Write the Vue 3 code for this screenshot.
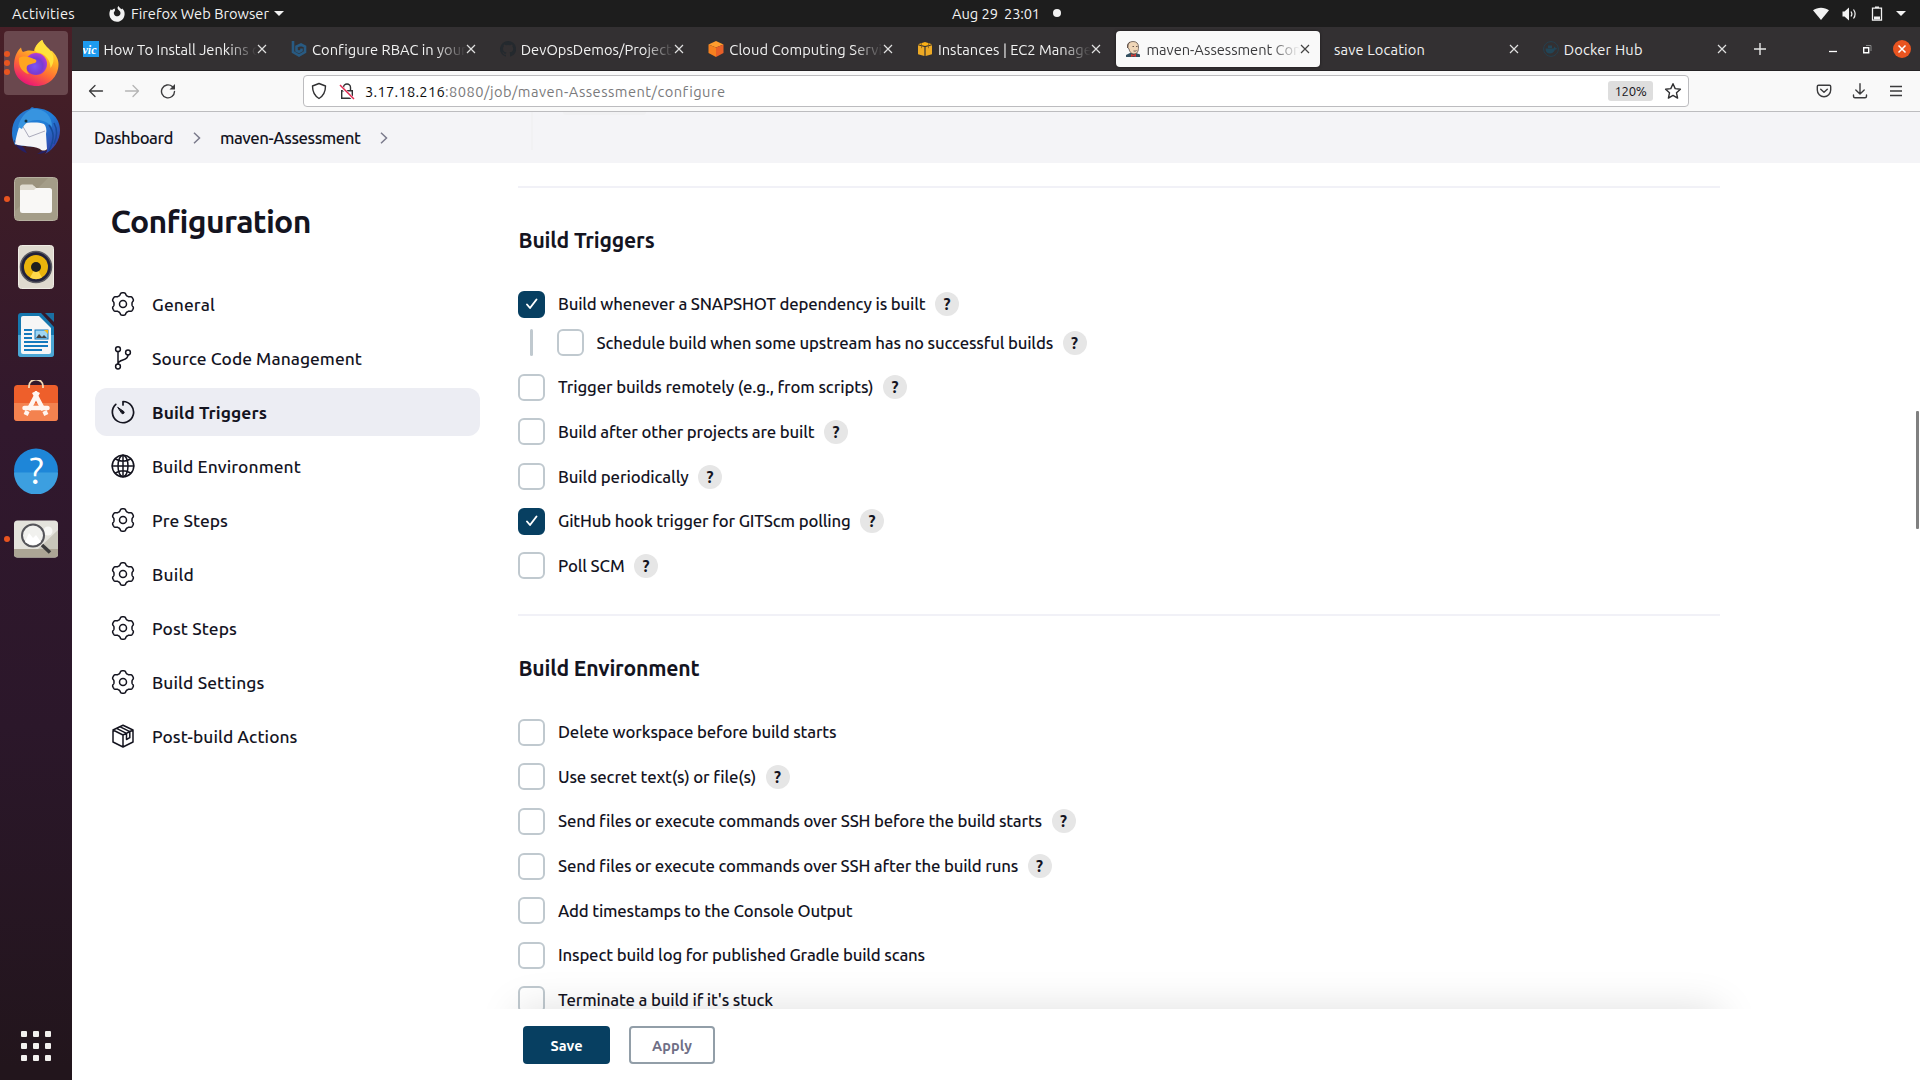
<script setup>
// Spreads the letters of a label so that it takes up the given width in px.
const vFit = {
  mounted(el, { value }) {
    if (!value) return
    const natural = el.getBoundingClientRect().width
    const count = el.textContent.length
    el.style.letterSpacing = ((value - natural) / count).toFixed(3) + 'px'
  }
}

const tabs = [
  { icon: 'vic', title: 'How To Install Jenkins o' },
  { icon: 'bit', title: 'Configure RBAC in your', w: 154 },
  { icon: 'github', title: 'DevOpsDemos/Project-', w: 155 },
  { icon: 'aws', title: 'Cloud Computing Servi', w: 153 },
  { icon: 'ec2', title: 'Instances | EC2 Manage', w: 154 },
  { icon: 'jenkins', title: 'maven-Assessment Con', w: 155, active: true },
  { icon: '', title: 'save Location', w: 91 },
  { icon: 'docker', title: 'Docker Hub', w: 79 }
]

const menu = [
  { icon: 'gear', label: 'General', w: 63 },
  { icon: 'branch', label: 'Source Code Management', w: 210 },
  { icon: 'timer', label: 'Build Triggers', w: 115, active: true },
  { icon: 'globe', label: 'Build Environment', w: 149 },
  { icon: 'gear', label: 'Pre Steps', w: 76 },
  { icon: 'gear', label: 'Build', w: 42 },
  { icon: 'gear', label: 'Post Steps', w: 85 },
  { icon: 'gear', label: 'Build Settings', w: 112.5 },
  { icon: 'box', label: 'Post-build Actions', w: 145.5 }
]

const triggers = [
  { label: 'Build whenever a SNAPSHOT dependency is built', w: 367.5, checked: true, help: true },
  { label: 'Schedule build when some upstream has no successful builds', w: 456.5, help: true, nested: true },
  { label: 'Trigger builds remotely (e.g., from scripts)', w: 315.5, help: true },
  { label: 'Build after other projects are built', w: 256.5, help: true },
  { label: 'Build periodically', w: 130.5, help: true },
  { label: 'GitHub hook trigger for GITScm polling', w: 292.5, checked: true, help: true },
  { label: 'Poll SCM', w: 66.5, help: true }
]

const environment = [
  { label: 'Delete workspace before build starts', w: 278.5 },
  { label: 'Use secret text(s) or file(s)', w: 197.5, help: true },
  { label: 'Send files or execute commands over SSH before the build starts', w: 483.5, help: true },
  { label: 'Send files or execute commands over SSH after the build runs', w: 459.5, help: true },
  { label: 'Add timestamps to the Console Output', w: 294.5 },
  { label: 'Inspect build log for published Gradle build scans', w: 367 },
  { label: "Terminate a build if it's stuck", w: 215 }
]

const sections = [
  { title: 'Build Triggers', w: 136, rows: triggers },
  { title: 'Build Environment', w: 181, rows: environment }
]

// Outline of the six-lobed cog, traced in polar coordinates around (12, 12).
const gearPath = (() => {
  const pts = []
  for (let i = 0; i < 144; i++) {
    const a = (i / 144) * Math.PI * 2
    const wave = Math.tanh(2 * Math.cos(6 * (a - Math.PI / 2)) + 0.2)
    const r = 10.1 + 1.15 * wave
    pts.push((12 + r * Math.cos(a)).toFixed(2) + ' ' + (12 + r * Math.sin(a)).toFixed(2))
  }
  return 'M' + pts.join('L') + 'Z'
})()
</script>

<template>
  <div class="desktop">
    <header class="topbar">
      <span v-fit="63" class="activities">Activities</span>
      <svg class="ff-mono" width="16" height="16" viewBox="0 0 16 16">
        <path fill="#f2f2f2" d="M1.8 3.2 3 4.2C4 3 5 2.6 6.2 2.7 5.8 3.5 5.7 4.2 6 5 5 5.4 4.6 6.6 5 8c.6 2 2.8 2.8 4.6 2 1.7-.8 2.3-2.6 1.6-4.2C10.700 4.500 9 4 8.600 2.400 8.400 1.400 9 .6 9.600 0c.5 1.600 1.800 2.200 2.800 3.200l.8-.7C15 4 15.800 6 15.600 8.400 15.200 12.700 12 15.700 8 15.700S.7 12.700.4 8.500C.3 6.500.7 4.800 1.800 3.200z" />
      </svg>
      <span v-fit="138" class="app-name">Firefox Web Browser</span>
      <i class="caret"></i>
      <div class="clock">
        <span v-fit="46">Aug 29</span><span v-fit="36" class="time">23:01</span><i class="notice"></i>
      </div>
      <div class="tray">
        <svg width="16" height="14" viewBox="0 0 16 14"><path fill="#f2f2f2" d="M0 3.200C4.500-.2 11.500-.2 16 3.200L8 13z" /></svg>
        <svg width="16" height="14" viewBox="0 0 16 14">
          <path fill="#f2f2f2" d="M.5 4.500h2L7 .5v13L2.500 9.500h-2z" />
          <path fill="none" stroke="#f2f2f2" stroke-width="1.200" d="M9 4.500q1.800 2.500 0 5M11.500 2.500q3.200 4.500 0 9" />
        </svg>
        <svg width="12" height="16" viewBox="0 0 12 16">
          <path fill="none" stroke="#f2f2f2" stroke-width="1.300" d="M1.500 2.200h9v12h-9z" /><path fill="#f2f2f2" d="M4 .5h4v1.500H4zM3 10.500h6v3H3z" />
        </svg>
        <i class="caret"></i>
      </div>
    </header>

    <div class="body">
      <nav class="dock">
        <div class="launcher running focused">
          <i class="pips"><b></b><b></b><b></b></i>
          <svg width="48" height="48" viewBox="0 0 48 48">
            <defs>
              <linearGradient id="fx" x1=".8" y1="0" x2=".3" y2="1"><stop offset="0" stop-color="#fff04a" /><stop offset=".35" stop-color="#ffb224" /><stop offset=".65" stop-color="#ff6a35" /><stop offset="1" stop-color="#e8107a" /></linearGradient>
              <radialGradient id="fg" cx=".45" cy=".6" r=".6"><stop offset="0" stop-color="#7a55f5" /><stop offset=".6" stop-color="#7a3bd0" /><stop offset="1" stop-color="#b53bd6" /></radialGradient>
            </defs>
            <path fill="url(#fx)" d="M2 27C2 20 4 13 9 8.500c.5 2.500 1 3.500 2 4.500 3-1.500 7-2 11-1 .5-4 4-8.500 8-11 1 4 3.500 6 5.500 8.500 1-.3 2 1 2.500 2l2 .5C44 16 46.500 20 46.500 25 46.500 38 36.500 47 24.500 47S2 38.500 2 27z" />
            <circle cx="24" cy="25" r="11" fill="url(#fg)" />
            <path fill="#ffa51f" d="M7 19c5-3 10-1 15 1 3 .5 3 3 1 4-3 1-6 1-8 3-1 3 0 6 2 8-6-1-11-7-10-16z" />
            <path fill="#ffe23d" d="M23 12c0-5 4-9 7.500-11 1 5 7 8 10 14 2 5 1 10-2 14 0-8-5-13-10-15-2 0-4-1-5.500-2z" />
          </svg>
        </div>
        <div class="launcher">
          <svg width="48" height="48" viewBox="0 0 48 48">
            <defs><linearGradient id="tb" x1="0" y1="0" x2="1" y2="1"><stop offset="0" stop-color="#2a72c8" /><stop offset=".5" stop-color="#1f7fd8" /><stop offset="1" stop-color="#3a2f9a" /></linearGradient></defs>
            <path fill="url(#tb)" d="M0 26C0 12 8 5 18 2c1-2 3-2 4-1C37 1 48 10 48 23c0 11-6 19-15 24 2-2 2-4 2-6L3 38C1 34 0 30 0 26z" />
            <path fill="#252064" d="M2 33c2 7 6 11 13 13l-3-5zM30 44l-5 3c4 0 8-1 10-3z" />
            <path fill="#f5f5f7" d="M3 37C4 30 6 22 9 15c7 2 15-1 23 2 2 2 3 6 2 10l1 15c-2 2-5 2-7 0-8-4-18-2-25-5z" />
            <path fill="none" stroke="#aab" stroke-width="1" d="m10 18 7 12 16-6" />
            <path fill="#3794e0" d="M6 20C8 11 14 4 20 2c12-1 20 6 20 18-6-7-15-9-24-5-3 2-5 4-6 7z" />
            <circle cx="14" cy="14" r="1.500" fill="#134" />
            <path fill="none" stroke="#174a99" stroke-width="1.500" d="M37 18c5 7 6 13 0 26M42 16c4 7 3 14 0 21" />
          </svg>
        </div>
        <div class="launcher running">
          <i class="pips"><b></b></i>
          <svg width="46" height="46" viewBox="0 0 46 46">
            <rect x="1.500" y="1.500" width="43" height="43" rx="4" fill="#9b937e" stroke="#b7b1a1" />
            <path fill="#a8a18d" d="M35 2h8q1.500 0 1.500 1.500V44H2V35z" opacity=".7" />
            <path fill="#dfdbd0" d="M7 15v-4q0-2.500 2.500-2.500h10L23 12v4z" />
            <rect x="7" y="12" width="32" height="25" rx="2.500" fill="#f9f8f6" /><path fill="#dfdbd0" d="M7 14V10h14l2 2-2 2z" />
          </svg>
        </div>
        <div class="launcher">
          <svg width="46" height="46" viewBox="0 0 46 46">
            <rect x="5.500" y="1.500" width="35" height="43" rx="3" fill="#dfdacf" stroke="#efece5" />
            <circle cx="23" cy="23" r="15.500" fill="#22223a" stroke="#5b5b62" stroke-width="1.500" />
            <circle cx="23" cy="23" r="12" fill="#eab40c" /><path fill="#ffd84a" d="m23 23-6 10.500a12 12 0 0 0 12 0z" />
            <circle cx="23" cy="23" r="5" fill="#1e1e1e" />
          </svg>
        </div>
        <div class="launcher">
          <svg width="46" height="46" viewBox="0 0 46 46">
            <path fill="#1577ae" d="M8 1h20l13 14v27q0 3-3 3H8q-3 0-3-3V4q0-3 3-3z" />
            <path fill="#4ba6d4" d="M5 23h36v19q0 3-3 3H8q-3 0-3-3z" />
            <path fill="#1a6fa3" d="M32 1h9v9z" />
            <path fill="#f6f6f6" d="M10 4h16l12 12v24q0 2-2 2H10q-2 0-2-2V6q0-2 2-2z" />
            <path stroke="#1379bd" stroke-width="2" d="M11 18h8M11 22h8M11 26h8M11 30h24M11 34h24M11 38h18" />
            <rect x="22" y="18" width="13" height="9" fill="#9fd5f2" stroke="#1379bd" /><path fill="#444" d="m23 26 3-4 3 3 2-2 3 3z" /><path fill="#f3b81c" d="M31 18h4v4z" />
          </svg>
        </div>
        <div class="launcher">
          <svg width="46" height="46" viewBox="0 0 46 46">
            <rect x="1" y="5" width="44" height="36" rx="3.500" fill="#ee5f2b" /><path fill="#f4824f" d="M1 23h44v14.500q0 3.500-3.500 3.500h-37Q1 41 1 37.500z" />
            <path fill="none" stroke="#f3d9b4" stroke-width="1.800" d="M16 8V6a7 6.500 0 0 1 14 0v2" />
            <g fill="none" stroke="#fff6f0" stroke-linecap="round"><path stroke-width="4.500" d="M11.500 28h23" /><path stroke-width="4.500" stroke-linecap="butt" d="m25 12-9.500 18M21 12l9.500 18" /><path stroke-width="4.500" stroke-linecap="butt" d="m14.500 31-1.800 4M31.500 31l1.800 4" /></g>
          </svg>
        </div>
        <div class="launcher">
          <svg width="46" height="46" viewBox="0 0 46 46">
            <circle cx="23" cy="22.500" r="22" fill="#1e86d8" /><path fill="#3c9fe0" d="M1 24.500h44a22 22 0 0 1-44 0z" />
            <text x="23.500" y="36" text-anchor="middle" class="help-glyph">?</text>
          </svg>
        </div>
        <div class="launcher running">
          <i class="pips"><b></b></i>
          <svg width="46" height="46" viewBox="0 0 46 46">
            <rect x="1" y="4.500" width="44" height="37" rx="3.500" fill="#e4e3dc" /><path fill="#c9c7bb" d="M45 14v19H25z" /><path fill="#aca595" d="M1 33h44v5q0 3.500-3.500 3.500h-37Q1 41.500 1 38z" />
            <circle cx="35" cy="15" r="4.500" fill="#f8f8f5" />
            <circle cx="20" cy="19.500" r="11" fill="#f1f1ee" stroke="#55555a" stroke-width="2" />
            <path fill="#fff" d="m12 26 4-9 4 5 3-3 5 7q-8 6-16 0z" />
            <path stroke="#3a3a3a" stroke-width="3.500" d="m29 29 8 7.500" />
          </svg>
        </div>
        <div class="show-apps"><i v-for="n in 9" :key="n"></i></div>
      </nav>

      <main class="browser">
        <div class="tabstrip">
          <div v-for="t in tabs" :key="t.title" class="slot">
            <div class="tab" :class="{ active: t.active }">
              <svg v-if="t.icon" class="favicon" width="16" height="16" viewBox="0 0 16 16">
                <template v-if="t.icon === 'vic'"><rect width="16" height="16" fill="#1d9bf0" /><text x="-.5" y="13" class="vic">vic</text></template>
                <path v-else-if="t.icon === 'bit'" fill="none" stroke="#285a82" stroke-width="2.600" d="M2 0v11l6 3.500 6-3.500V5.500l-4-2-4.500 2v4.200L8 11l2.500-1.400V7.500" />
                <path v-else-if="t.icon === 'github'" fill="#24292e" d="M8 0a8 8 0 0 0-2.500 15.600c.4.1.5-.2.5-.4v-1.500c-2 .4-2.700-.9-2.900-1.500-.1-.3-.6-1.100-1-1.300 1-.2 1.400.7 1.700 1.100.6 1.100 1.700.8 2.200.6.1-.5.300-.9.600-1.100C4.700 11.300 3 10.600 3 7.600c0-.9.300-1.600.8-2.100-.1-.2-.4-1 .1-2.100 0 0 .7-.2 2.200.8a7.600 7.600 0 0 1 4 0c1.500-1 2.200-.8 2.200-.8.4 1.100.2 1.900.1 2.100.5.6.8 1.300.8 2.100 0 3.100-1.900 3.700-3.700 3.900.4.300.6.800.6 1.500v2.200c0 .2.100.5.500.4A8 8 0 0 0 8 0z" />
                <template v-else-if="t.icon === 'aws'"><path fill="#ff9d2e" d="m8 0 7.500 3.500L8 6.500.5 3.500z" /><path fill="#f7811f" d="M.5 3.500 8 6.500V16l-7.500-4z" /><path fill="#e85f28" d="M15.500 3.500 8 6.500V16l7.500-4z" /></template>
                <template v-else-if="t.icon === 'ec2'"><path fill="#fbb016" d="M8 1 15 3.200 8 5 1 3.200z" /><path fill="#eeaa25" d="M1 4.200 7.400 6v9L1 13.200zM15 4.200 8.600 6v9l6.400-1.800z" /><path stroke="#7b551a" d="M4.500 2.200v5M11.500 2.200v5" stroke-width=".7" /></template>
                <template v-else-if="t.icon === 'jenkins'">
                  <path fill="#335061" d="M1 16v-2l4-2h6l4 1.500V16z" /><path fill="#f0d6b7" stroke="#4a3d38" stroke-width=".7" d="M3 5C3 2 5 .5 8 .5c3.500 0 5.500 2 5.500 5.500 0 4-1 7-4.500 7-3 0-4.500-2.500-5-5Q2.500 7 3 5z" />
                  <path fill="none" stroke="#5b4a42" stroke-width=".9" d="M2.500 7V4Q3 2 5 1M7.500 5.500h1.500M11 5.500h1.500M8.500 10q2 .5 3-.5" /><path fill="#d33833" d="m6 13 2.500 1L11 12.500V16L8.500 15 6 16z" />
                </template>
                <template v-else><circle cx="8" cy="8" r="7.400" fill="none" stroke="#25404f" /><path fill="#224658" d="M2.500 7.500h8q1-.5.5-2 1.500.5 1.500 1.500l1.500.3q-.5 1.500-2 1.500-1.500 3.700-5 3.700-4.500 0-4.500-5zM5 4.500h4V7H5z" /></template>
              </svg>
              <div class="title"><span v-fit="t.w">{{ t.title }}</span></div>
              <svg class="close" width="10" height="10" viewBox="0 0 10 10"><path fill="none" stroke="currentColor" stroke-width="1.200" d="m1 1 8 8M9 1 1 9" /></svg>
            </div>
          </div>
          <svg class="newtab" width="14" height="14" viewBox="0 0 14 14"><path stroke="#e8e8e8" stroke-width="1.400" d="M7 1v12M1 7h12" /></svg>
          <div class="window-buttons">
            <svg width="10" height="10" viewBox="0 0 10 10"><path stroke="#fff" stroke-width="1.300" d="M1 7.500h8" /></svg>
            <svg width="10" height="10" viewBox="0 0 10 10"><path fill="none" stroke="#fff" stroke-width="1.400" d="M1.700 3.700h5v5h-5z" /><path fill="none" stroke="#888" d="M4 1.500h5V7" /></svg>
            <span class="quit"><svg width="10" height="10" viewBox="0 0 10 10"><path stroke="#fff" stroke-width="1.500" d="m1.500 1.500 7 7M8.500 1.500l-7 7" /></svg></span>
          </div>
        </div>

        <div class="toolbar">
          <svg class="back" width="16" height="16" viewBox="0 0 16 16"><path fill="none" stroke="#3b3b3d" stroke-width="1.300" stroke-linecap="round" stroke-linejoin="round" d="M14.500 8H1.500M7 2.500 1.500 8 7 13.500" /></svg>
          <svg class="forward" width="16" height="16" viewBox="0 0 16 16"><path fill="none" stroke="#b5b5b5" stroke-width="1.300" stroke-linecap="round" stroke-linejoin="round" d="M1.500 8h13M9 2.500 14.500 8 9 13.500" /></svg>
          <svg class="reload" width="16" height="16" viewBox="0 0 16 16"><path fill="none" stroke="#3b3b3d" stroke-width="1.400" stroke-linecap="round" d="M14.500 8.500A6.500 6.500 0 1 1 12.300 3.500" /><path fill="#3b3b3d" d="M15 1v5.500H9.500z" /></svg>
          <div class="urlbar">
            <svg class="shield" width="16" height="18" viewBox="0 0 16 18"><path fill="none" stroke="#303032" stroke-width="1.400" stroke-linejoin="round" d="M8 1.500 14.500 4c0 5.500-1.500 9.500-6.500 12.500C3 13.500 1.500 9.500 1.500 4z" /></svg>
            <svg class="lock" width="16" height="18" viewBox="0 0 16 18"><path fill="none" stroke="#303032" stroke-width="1.400" d="M2.700 8.700h10.600v7.600H2.700zM4.500 8.500V5.500a3.500 3.500 0 0 1 7 0v3" /><path stroke="#fff" stroke-width="3" d="M1 3.500 14.500 17" /><path stroke="#e22850" stroke-width="1.500" d="M1 3 15 17" /></svg>
            <span v-fit="80" class="host">3.17.18.216</span><span v-fit="280" class="path">:8080/job/maven-Assessment/configure</span>
            <span class="zoom"><span v-fit="32">120%</span></span>
            <svg class="star" width="18" height="18" viewBox="0 0 18 18"><path fill="none" stroke="#303032" stroke-width="1.400" stroke-linejoin="round" d="m9 1.700 2.200 4.900 5.200.6-3.900 3.600 1.100 5.300L9 13.400l-4.600 2.700 1.100-5.300L1.600 7.200l5.200-.6z" /></svg>
          </div>
          <div class="tools">
            <svg width="16" height="16" viewBox="0 0 16 16"><path fill="none" stroke="#3b3b3d" stroke-width="1.400" stroke-linecap="round" stroke-linejoin="round" d="M2.500 2.200h11q1.200 0 1.200 1.200V7a6.700 6.700 0 0 1-13.400 0V3.400q0-1.200 1.200-1.200zM4.700 6.200 8 9.300l3.300-3.100" /></svg>
            <svg width="16" height="16" viewBox="0 0 16 16"><path fill="none" stroke="#3b3b3d" stroke-width="1.400" stroke-linecap="round" stroke-linejoin="round" d="M8 .8v10M3.800 7 8 11l4.200-4M1.500 12v1.300q0 1.500 1.500 1.500h10q1.500 0 1.500-1.500V12" /></svg>
            <svg width="14" height="16" viewBox="0 0 14 16"><path stroke="#3b3b3d" stroke-width="1.300" d="M1 3.500h12M1 8h12M1 12.500h12" /></svg>
          </div>
        </div>

        <div class="crumbs">
          <i class="ghost-line"></i><i class="ghost-bar"></i>
          <span v-fit="79">Dashboard</span>
          <svg width="8" height="12" viewBox="0 0 8 12"><path fill="none" stroke="#7a7a8c" stroke-width="1.500" d="m1 .8 5.500 5.200L1 11.200" /></svg>
          <span v-fit="140.500">maven-Assessment</span>
          <svg width="8" height="12" viewBox="0 0 8 12"><path fill="none" stroke="#7a7a8c" stroke-width="1.500" d="m1 .8 5.500 5.200L1 11.200" /></svg>
        </div>

        <div class="page">
          <aside class="side">
            <h1><span v-fit="199.500">Configuration</span></h1>
            <a v-for="m in menu" :key="m.label" class="item" :class="{ active: m.active }">
              <svg width="24" height="24" viewBox="0 0 24 24" fill="none" stroke="#14141f" stroke-width="1.500" stroke-linecap="round" stroke-linejoin="round">
                <template v-if="m.icon === 'gear'"><path :d="gearPath" /><circle cx="12" cy="12" r="3.500" /></template>
                <template v-else-if="m.icon === 'branch'"><circle cx="7" cy="3.200" r="2.400" /><circle cx="7" cy="20.500" r="2.400" /><circle cx="17" cy="6.500" r="2.400" /><path d="M7 5.700V18M17 9c0 6.500-9.500 3.500-10 9" /></template>
                <template v-else-if="m.icon === 'timer'"><path stroke-width="1.700" d="M12 5V1.500A10.600 10.600 0 1 1 4.800 4.300" /><path fill="#14141f" stroke-width="1" d="M7 7.500l6 4.200a1.400 1.400 0 0 1-1.900 1.900z" /></template>
                <template v-else-if="m.icon === 'globe'"><circle cx="12" cy="12" r="10.800" /><ellipse cx="12" cy="12" rx="5" ry="10.800" /><path d="M12 1.200v21.600M1.200 12h21.600M4.500 5q7.500 4.500 15 0M4.500 19q7.500-4.500 15 0" /></template>
                <template v-else><path d="M12 1.200 22 6v12l-10 5L2 18V6zM2 6l10 5 10-5M12 11v12M5.500 4.300l10 5M8.800 2.700l10 5v6l-3.300 1.800V9.300" /></template>
              </svg>
              <span v-fit="m.w">{{ m.label }}</span>
            </a>
          </aside>

          <div class="form">
            <section v-for="s in sections" :key="s.title">
              <h2><span v-fit="s.w">{{ s.title }}</span></h2>
              <div v-for="r in s.rows" :key="r.label" class="row" :class="{ nested: r.nested }">
                <span class="check" :class="{ on: r.checked }">
                  <svg v-if="r.checked" width="14" height="14" viewBox="0 0 14 14"><path fill="none" stroke="#fff" stroke-width="1.900" stroke-linecap="round" stroke-linejoin="round" d="m2 7.500 3 3.500 6.500-8.500" /></svg>
                </span>
                <span v-fit="r.w" class="label">{{ r.label }}</span>
                <span v-if="r.help" class="help">?</span>
              </div>
            </section>
            <div class="fade"></div>
          </div>
          <i class="scrollbar"></i>
        </div>

        <footer class="actions">
          <button class="save"><span v-fit="32">Save</span></button>
          <button class="apply"><span v-fit="40">Apply</span></button>
        </footer>
      </main>
    </div>
  </div>
</template>

<style>
body { margin: 0; overflow: hidden; }
</style>

<style scoped>
.desktop { width: 1920px; height: 1080px; display: flex; flex-direction: column; overflow: hidden; font-family: Ubuntu, "Noto Sans", "Open Sans", sans-serif; font-size: 14.670px; background: #fff; }
.desktop * { box-sizing: border-box; }
svg { display: block; flex: none; }
span { white-space: nowrap; }

.topbar { position: relative; height: 27px; flex: none; background: #1d1d1d; color: #f2f2f2; display: flex; align-items: center; padding: 0 14px 0 12px; }
.ff-mono { margin-left: 34px; }
.app-name { margin-left: 6px; }
.caret { border: 5px solid transparent; border-top-color: #f2f2f2; border-bottom: 0; margin-left: 5px; }
.clock { position: absolute; left: 952px; top: 0; height: 26px; display: flex; align-items: center; }
.time { margin-left: 6px; }
.notice { width: 8px; height: 8px; border-radius: 50%; background: #f2f2f2; margin-left: 13px; }
.tray { margin-left: auto; display: flex; align-items: center; gap: 12px; }
.tray svg:nth-child(2) { margin-left: 1px; }
.tray svg:nth-child(3) { margin-left: 1px; }
.tray .caret { margin-left: 1px; }

.body { flex: 1; display: flex; min-height: 0; }
.dock { width: 72px; flex: none; display: flex; flex-direction: column; align-items: center; gap: 4px; padding-top: 4px; background: linear-gradient(180deg, #481f27 0, #3c1c27 180px, #31182d 400px, #2b172a 700px, #22151c 1040px); }
.launcher { position: relative; width: 64px; height: 64px; display: flex; align-items: center; justify-content: center; border-radius: 4px; }
.focused { background: #6a484e; }
.pips { position: absolute; left: 0; top: 0; height: 64px; display: flex; flex-direction: column; justify-content: center; gap: 3px; }
.pips b { width: 6px; height: 6px; border-radius: 50%; background: #e95420; }
.help-glyph { font: 37px Ubuntu, Lato, sans-serif; fill: #fff; }
.show-apps { margin: auto 0 19px; display: grid; grid-template-columns: repeat(3, 6px); gap: 6px; }
.show-apps i { height: 6px; border-radius: 1px; background: #f2f0ee; }

.browser { flex: 1; display: flex; flex-direction: column; min-width: 0; }
.tabstrip { height: 44px; flex: none; background: #333032; border-bottom: 1px solid #242224; display: flex; align-items: center; color: #f2f2f2; }
.slot { width: 208.6px; flex: none; }
.slot:first-child { margin-left: 1.5px; }
.tab { width: 204px; height: 36px; border-radius: 4px; display: flex; align-items: center; padding-left: 9px; padding-right: 10.500px; }
.tab.active { background: #f9f9f9; color: #3a3a3c; box-shadow: 0 0 3px rgba(0, 0, 0, .5); }
.favicon { margin-right: 5px; overflow: hidden; }
.vic { font: italic bold 12px "Liberation Serif", serif; fill: #fff; }
.title { flex: 1; min-width: 0; overflow: hidden; padding-top: 1px; mask-image: linear-gradient(90deg, #000 calc(100% - 30px), transparent 100%); }
.slot:nth-child(n + 7) .title { mask-image: none; }
.close { color: #e0e0e0; }
.active .close { color: #444; }
.newtab { margin-left: 10.500px; }
.window-buttons { margin-left: auto; margin-right: 9px; display: flex; align-items: center; gap: 24px; }
.quit { width: 18px; height: 18px; border-radius: 50%; background: #e95420; display: flex; align-items: center; justify-content: center; margin-left: -3px; }

.toolbar { height: 41px; flex: none; background: #f9f9f9; border-bottom: 1px solid #bcbcbf; display: flex; align-items: center; padding-left: 16px; }
.forward { margin-left: 20px; }
.reload { margin-left: 20px; }
.urlbar { width: 1386px; height: 32px; margin-left: 127px; background: #fff; border: 1px solid #bcbcbf; border-radius: 4px; display: flex; align-items: center; padding: 0 6px 0 7px; }
.lock { margin-left: 12px; margin-right: 10px; }
.host, .path { padding-top: 1px; }
.host { color: #0c0c0d; }
.path { color: #7a7a7c; }
.zoom { margin-left: auto; margin-right: 11px; width: 45px; height: 20px; border-radius: 3px; background: #dedede; color: #15141a; font-size: 13.200px; display: flex; align-items: center; justify-content: center; }
.tools { display: flex; align-items: center; margin-left: auto; margin-right: 17px; gap: 20px; }
.tools svg:last-child { margin-left: 1px; }

.crumbs { position: relative; height: 51px; flex: none; background: #f4f4f7; color: #14141f; display: flex; align-items: center; gap: 19.500px; padding-left: 22px; font-size: 16.800px; font-weight: 500; }
.ghost-line { position: absolute; left: 459px; top: 0; width: 2px; height: 38px; background: #f1f1f3; }
.ghost-bar { position: absolute; left: 491px; top: 0; width: 83px; height: 3px; background: #f1f1f3; border-radius: 0 0 3px 3px; }

.page { position: relative; flex: 1; min-height: 0; overflow: hidden; display: flex; color: #14141f; }
.side { width: 446px; flex: none; padding-left: 23px; }
h1 { margin: 33px 0 34px 15.500px; font-size: 32px; line-height: 50px; height: 50px; font-weight: 700; }
.item { display: flex; align-items: center; width: 385px; height: 48px; margin-bottom: 6px; padding-left: 16px; gap: 17px; border-radius: 12px; font-size: 17.400px; font-weight: 500; }
.item.active { background: #ecedf3; font-weight: 700; }

.form { width: 1202px; display: flex; flex-direction: column; padding-top: 23px; }
section { border-top: 2px solid #f1f1f7; padding-top: 35px; height: 428px; flex: none; }
h2 { margin: 0 0 33.600px .5px; font-size: 21.200px; line-height: 34px; height: 34px; font-weight: 700; }
.row { display: flex; align-items: center; height: 27px; margin-bottom: 17.650px; font-size: 16.800px; font-weight: 500; }
.label { padding-bottom: 1px; }
.check { width: 27px; height: 27px; border: 2px solid #c0c9cf; border-radius: 6px; margin-right: 13px; background: #fff; display: flex; align-items: center; justify-content: center; }
.check.on { background: #073f61; border-color: #073f61; }
.row.nested { height: 27px; margin: -6.200px 0 17.700px 12px; }
.row.nested::before { content: ""; width: 3px; height: 27px; border-radius: 2px; background: #c0c9cf; margin-right: 23.500px; }
.help { width: 24px; height: 24px; margin-left: 9.500px; border-radius: 50%; background: #e6e6e6; font-size: 16px; font-weight: 700; line-height: 24px; text-align: center; }
.fade { position: absolute; left: 446px; width: 1202px; bottom: -50px; height: 50px; box-shadow: 0 0 40px rgba(0, 0, 0, .13); }
.scrollbar { position: absolute; right: 1px; top: 248px; width: 3px; height: 118px; border-radius: 1px; background: #808080; }

.actions { height: 71px; flex: none; background: #fff; display: flex; align-items: flex-start; gap: 19px; padding: 17px 0 0 451px; }
button { height: 38px; padding: 1px 0 0; border-radius: 4px; font: 700 14.500px Ubuntu, "Noto Sans", sans-serif; display: flex; align-items: center; justify-content: center; }
.save { width: 87px; border: 0; background: #073f61; color: #fff; }
.apply { width: 86px; border: 2px solid #929ea8; background: #fff; color: #6f6f86; }
</style>
